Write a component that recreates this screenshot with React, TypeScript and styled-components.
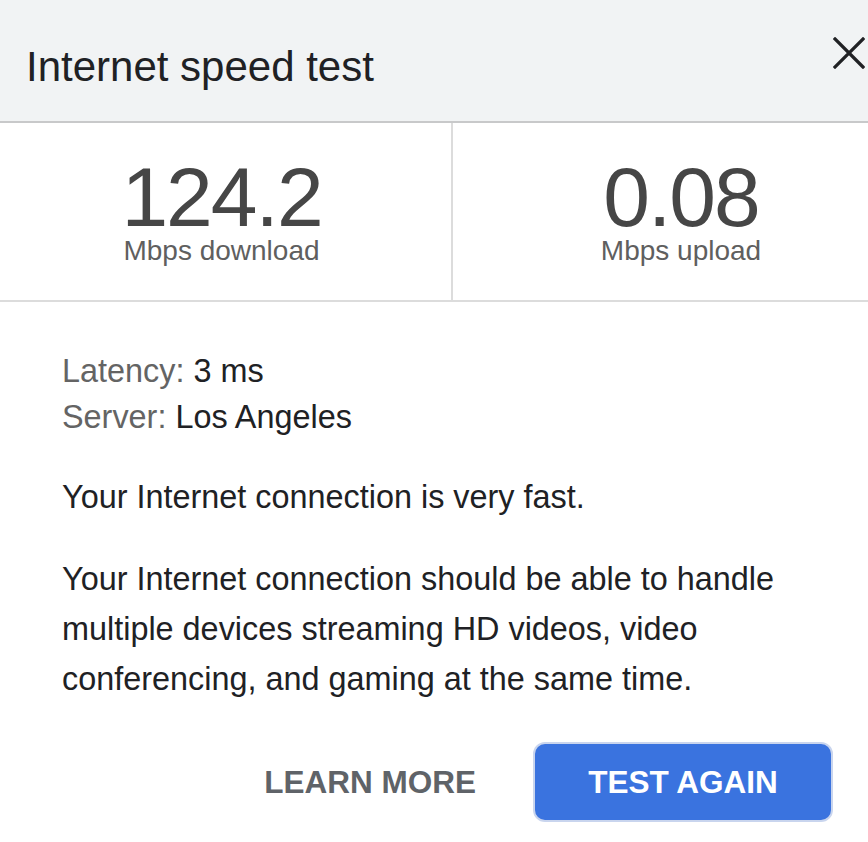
import React from "react";
import styled, { createGlobalStyle } from "styled-components";

const GlobalStyle = createGlobalStyle`
  html, body {
    margin: 0;
    padding: 0;
    background: #ffffff;
  }
  body {
    font-family: "Liberation Sans", Arial, Helvetica, sans-serif;
    color: #202124;
  }
  * { box-sizing: border-box; }
`;

const Dialog = styled.div`
  width: 868px;
  height: 842px;
  background: #ffffff;
  overflow: hidden;
  display: flex;
  flex-direction: column;
`;

const Header = styled.header`
  height: 123px;
  background: #f1f3f4;
  border-bottom: 2px solid #c8c9ca;
  display: flex;
  justify-content: space-between;
  align-items: flex-start;
  padding: 0 3px 0 26px;
`;

const Title = styled.h1`
  margin: 0;
  padding-top: 43px;
  font-size: 42px;
  line-height: 47px;
  font-weight: 400;
  color: #202124;
`;

const CloseButton = styled.button`
  margin-top: 37px;
  width: 32px;
  height: 32px;
  padding: 0;
  border: none;
  background: transparent;
  display: flex;
  align-items: center;
  justify-content: center;
  cursor: pointer;
  color: #202124;
`;

const Stats = styled.section`
  display: grid;
  grid-template-columns: 451px 458px;
  width: 909px;
  border-bottom: 2px solid #dcdcdc;
`;

const StatColumn = styled.div<{ $divider?: boolean; $shift?: number }>`
  height: 177px;
  padding-top: 3px;
  padding-right: ${(p) => p.$shift ?? 0}px;
  display: flex;
  flex-direction: column;
  align-items: center;
  justify-content: center;
  border-left: ${(p) => (p.$divider ? "2px solid #dcdcdc" : "none")};
`;

const StatValue = styled.div`
  font-size: 84px;
  line-height: 76px;
  letter-spacing: -2px;
  color: #464646;
`;

const StatLabel = styled.div`
  font-size: 28px;
  line-height: 32px;
  color: #5f5f5f;
`;

const Body = styled.div`
  padding: 46px 30px 0 62px;
  font-size: 32.4px;
  color: #202124;
`;

const InfoList = styled.div`
  line-height: 46px;
`;

const InfoRow = styled.div``;

const InfoKey = styled.span`
  color: #646464;
`;

const Paragraph = styled.p`
  margin: 32px 0 0;
  line-height: 50px;
`;

const Footer = styled.div`
  display: flex;
  justify-content: flex-end;
  align-items: center;
  gap: 29px;
  padding: 38px 35px 0 0;
`;

const TextButton = styled.button`
  height: 80px;
  padding: 0 28px;
  border: none;
  background: transparent;
  font-family: inherit;
  font-size: 31.5px;
  font-weight: 700;
  color: #5f6368;
  cursor: pointer;
`;

const PrimaryButton = styled.button`
  width: 300px;
  height: 80px;
  border: 2px solid #c9d5ee;
  border-radius: 12px;
  background: #3a73df;
  font-family: inherit;
  font-size: 31.5px;
  font-weight: 700;
  color: #ffffff;
  cursor: pointer;
`;

const CloseIcon = () => (
  <svg width="32" height="32" viewBox="0 0 32 32" aria-hidden="true">
    <path d="M2 2 L30 30 M30 2 L2 30" stroke="#202124" strokeWidth="3.2" strokeLinecap="square" fill="none" />
  </svg>
);

export default function App() {
  return (
    <>
      <GlobalStyle />
      <Dialog>
        <Header>
          <Title>Internet speed test</Title>
          <CloseButton aria-label="Close">
            <CloseIcon />
          </CloseButton>
        </Header>
        <Stats>
          <StatColumn $shift={8}>
            <StatValue>124.2</StatValue>
            <StatLabel>Mbps download</StatLabel>
          </StatColumn>
          <StatColumn $divider>
            <StatValue>0.08</StatValue>
            <StatLabel>Mbps upload</StatLabel>
          </StatColumn>
        </Stats>
        <Body>
          <InfoList>
            <InfoRow>
              <InfoKey>Latency:</InfoKey> 3 ms
            </InfoRow>
            <InfoRow>
              <InfoKey>Server:</InfoKey> Los Angeles
            </InfoRow>
          </InfoList>
          <Paragraph>Your Internet connection is very fast.</Paragraph>
          <Paragraph>
            Your Internet connection should be able to handle multiple devices streaming HD videos, video
            conferencing, and gaming at the same time.
          </Paragraph>
        </Body>
        <Footer>
          <TextButton>LEARN MORE</TextButton>
          <PrimaryButton>TEST AGAIN</PrimaryButton>
        </Footer>
      </Dialog>
    </>
  );
}
